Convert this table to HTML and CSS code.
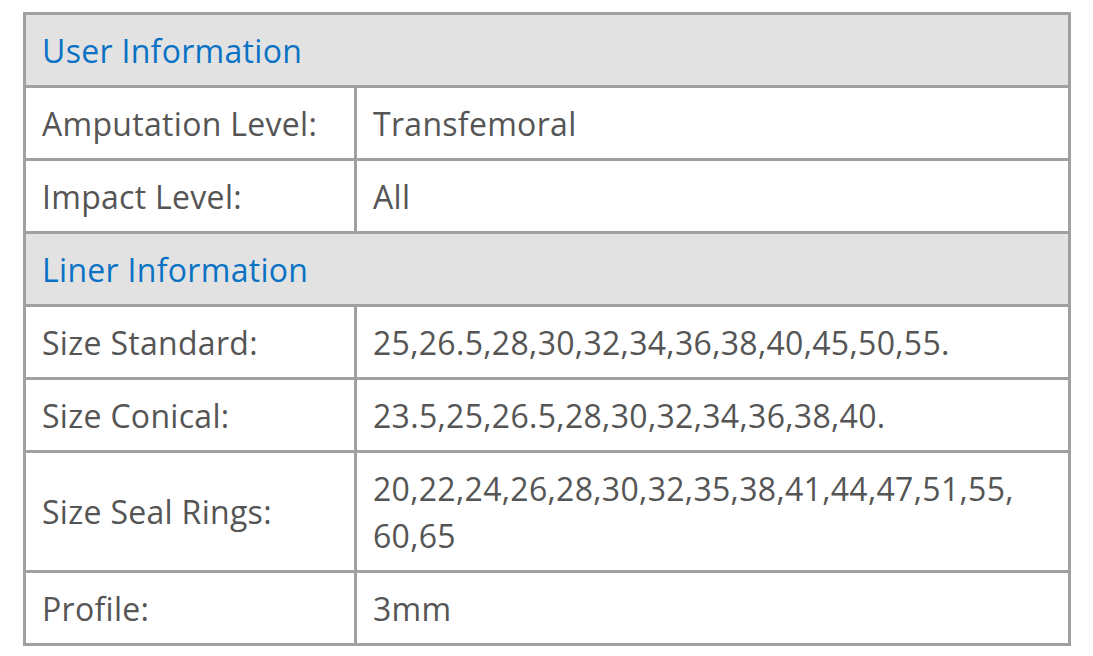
FILE: index.html
```html
<!DOCTYPE html>
<html>
<head>
<meta charset="utf-8">
<link rel="stylesheet" href="styles.css">
</head>
<body>
<div class="wrap">
<table class="spec">
  <colgroup><col class="c1"><col class="c2"></colgroup>
  <tr><th class="section" colspan="2">User Information</th></tr>
  <tr><td class="label">Amputation Level:</td><td class="value">Transfemoral</td></tr>
  <tr><td class="label">Impact Level:</td><td class="value">All</td></tr>
  <tr><th class="section" colspan="2">Liner Information</th></tr>
  <tr><td class="label">Size Standard:</td><td class="value">25,26.5,28,30,32,34,36,38,40,45,50,55.</td></tr>
  <tr><td class="label">Size Conical:</td><td class="value">23.5,25,26.5,28,30,32,34,36,38,40.</td></tr>
  <tr><td class="label">Size Seal Rings:</td><td class="value">20,22,24,26,28,30,32,35,38,41,44,47,51,55,<br>60,65</td></tr>
  <tr><td class="label">Profile:</td><td class="value">3mm</td></tr>
</table>
</div>
</body>
</html>
```
FILE: styles.css
```css
html, body { margin: 0; padding: 0; background: #fff; }
.wrap { padding: 12px 0 0 23px; }
.spec {
  border-collapse: collapse;
  width: 1048px;
  table-layout: fixed;
  font-family: "Open Sans", "Noto Sans", sans-serif;
  font-size: 32px;
  letter-spacing: 0.3px;
  color: #555;
}
.c1 { width: 331px; }
.spec th, .spec td {
  border: 3px solid #a0a0a0;
  padding: 11.5px 16px;
  line-height: 47px;
  text-align: left;
  vertical-align: middle;
  font-weight: normal;
}
.spec .section {
  background: #e2e2e2;
  color: #0a72c4;
}
```
